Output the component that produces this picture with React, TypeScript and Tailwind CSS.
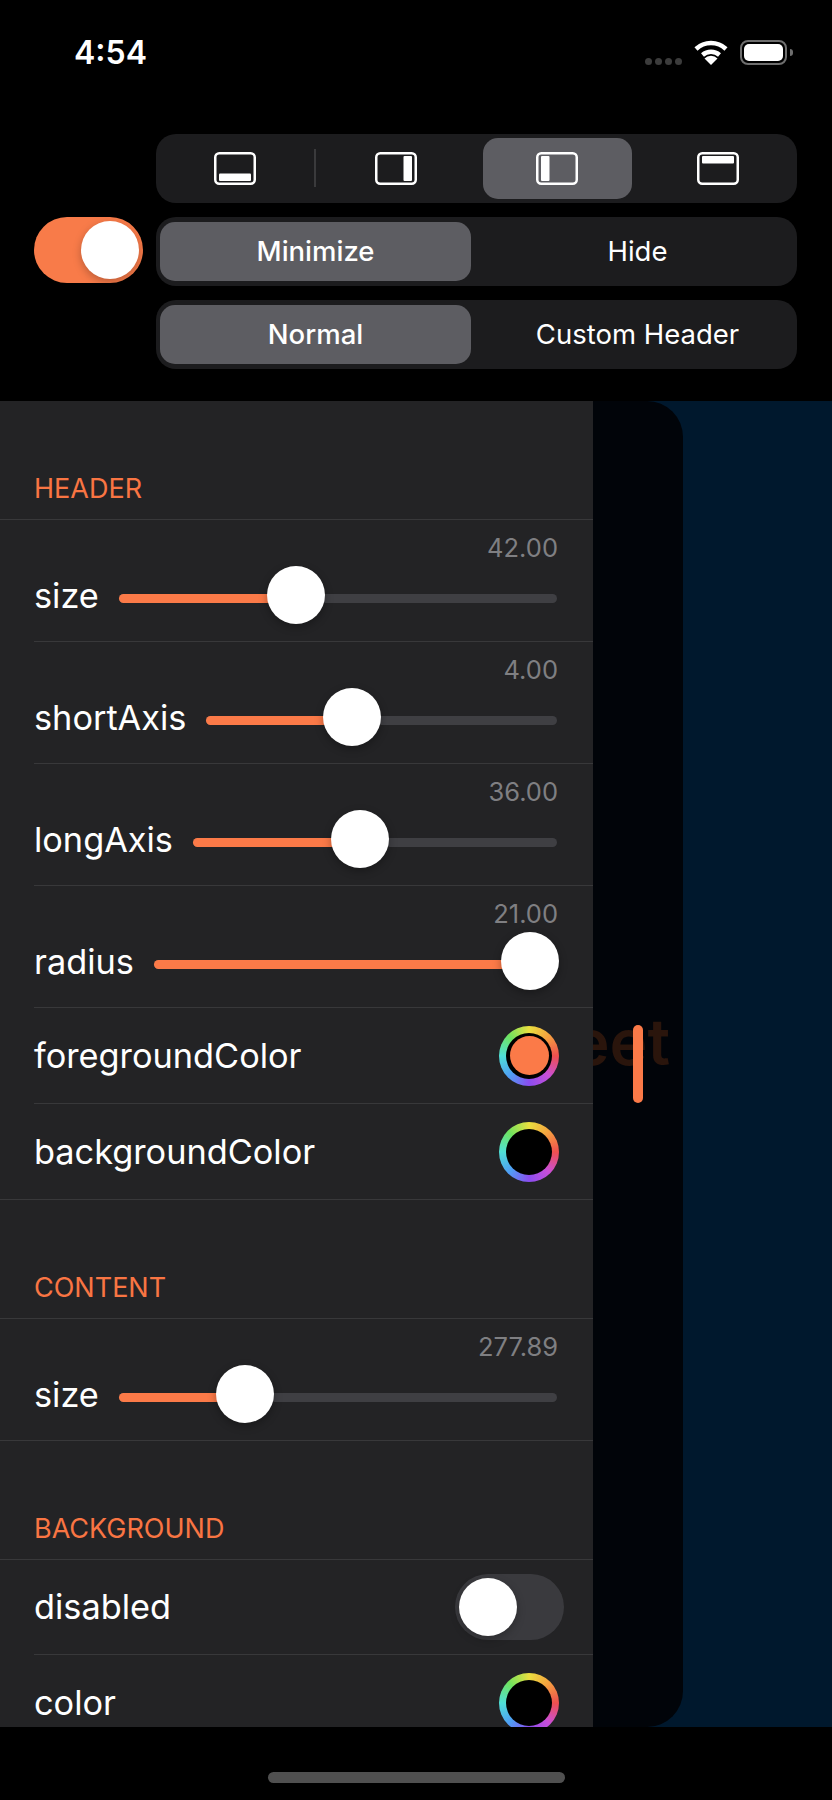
import React from "react";

function PanelIcon({ side }: { side: "bottom" | "right" | "left" | "top" }) {
  const bar =
    side === "bottom" ? { x: 5, y: 21.5, w: 32, h: 7.5 } :
    side === "top" ? { x: 5, y: 4, w: 32, h: 7.5 } :
    side === "right" ? { x: 28.5, y: 4, w: 8.5, h: 25 } :
    { x: 5, y: 4, w: 8.5, h: 25 };
  return (
    <svg width="42" height="33" viewBox="0 0 42 33" fill="none">
      <rect x="1.25" y="1.25" width="39.5" height="30.5" rx="4" stroke="#fff" strokeWidth="2.5" />
      <rect x={bar.x} y={bar.y} width={bar.w} height={bar.h} rx="1" fill="#fff" />
    </svg>
  );
}

function TextSegment({ left, right }: { left: string; right: string }) {
  return (
    <div className="grid h-[69px] grid-cols-2 gap-[11px] rounded-[20px] bg-[#1c1c1e] p-[4px] py-[5px]">
      <div className="flex items-center justify-center rounded-[15px] bg-[#5d5d62] pt-[1px] text-[27.5px] font-medium text-white">{left}</div>
      <div className="flex items-center justify-center pt-[1px] text-[27.5px] font-normal text-white">{right}</div>
    </div>
  );
}

function Section({ title, children }: { title: string; children: React.ReactNode }) {
  return (
    <section>
      <div className="flex h-[119px] items-end border-b border-[#38383a] pb-[16px] pl-[34px] text-[27px] leading-[28px] text-[#f97543]">{title}</div>
      {children}
    </section>
  );
}

function SliderRow({ label, value, pct, last }: { label: string; value: string; pct: number; last?: boolean }) {
  return (
    <div className={last ? "h-[122px] border-b border-[#38383a] pl-[34px]" : "ml-[34px] h-[122px] border-b border-[#38383a]"}>
      <div className="pr-[35px] pt-[14px] text-right text-[25.5px] leading-[28px] text-[#7f7f82]">{value}</div>
      <div className="mt-[6px] flex h-[58px] items-center gap-[20px] pr-[36px]">
        <span className="mb-[2px] text-[34.3px] leading-[40px] text-white">{label}</span>
        <div className="relative mt-[2px] h-[9px] flex-1 rounded-full bg-[#3f3f43]">
          <div className="h-full rounded-full bg-[#fb7a48]" style={{ width: `${Math.min(pct, 100)}%` }} />
          <div
            className="absolute top-[-28px] h-[58px] w-[58px] rounded-full bg-white shadow-[0_3px_8px_rgba(0,0,0,0.3)]"
            style={{ left: `calc((100% - 58px) * ${pct / 100})` }}
          />
        </div>
      </div>
    </div>
  );
}

function ColorRow({ label, dot, last }: { label: string; dot?: boolean; last?: boolean }) {
  return (
    <div className={(last ? "border-b pl-[34px]" : "ml-[34px] border-b") + " flex h-[96px] items-center justify-between border-[#38383a] pr-[34px]"}>
      <span className="text-[34.3px] leading-[40px] text-white">{label}</span>
      <div className="flex h-[60px] w-[60px] items-center justify-center rounded-full bg-[conic-gradient(#eadf3f,#f5a03f,#ef4f4f,#c94fd8,#8a4df0,#4f9ff5,#4fe0d8,#6fe35f,#eadf3f)]">
        <div className="flex h-[46px] w-[46px] items-center justify-center rounded-full bg-black">
          {dot && <div className="h-[39px] w-[39px] rounded-full bg-[#fb7a48]" />}
        </div>
      </div>
    </div>
  );
}

export default function App() {
  return (
    <div className="flex h-[1800px] w-[832px] flex-col overflow-hidden bg-black font-['Inter',sans-serif] text-white">
      <header className="h-[134px] shrink-0">
        <div className="flex items-start justify-between pl-[74px] pr-[39px] pt-[33px]">
          <span className="text-[32px] font-semibold leading-[40px]">4:54</span>
          <div className="flex items-center gap-[11px] pt-[5px]">
            <div className="flex gap-[3px] pt-[18px]">
              {[0, 1, 2, 3].map((i) => (
                <div key={i} className="h-[7px] w-[7px] rounded-full bg-[#3c3c3c]" />
              ))}
            </div>
            <svg width="36" height="28" viewBox="0 0 36 28" fill="none">
              <path d="M3 11 A22 22 0 0 1 33 11" stroke="#fff" strokeWidth="4.5" strokeLinecap="butt" />
              <path d="M9.5 17 A13 13 0 0 1 26.5 17" stroke="#fff" strokeWidth="4.5" />
              <path d="M18 27 L11.5 20.5 A9 9 0 0 1 24.5 20.5 Z" fill="#fff" />
            </svg>
            <div className="flex items-center gap-[3px]">
              <div className="h-[25px] w-[47px] rounded-[8px] border-2 border-[#6e6e6e] p-[2px]">
                <div className="h-full w-full rounded-[5px] bg-white" />
              </div>
              <div className="h-[7px] w-[3px] rounded-r-full bg-[#6e6e6e]" />
            </div>
          </div>
        </div>
      </header>

      <div className="flex h-[267px] shrink-0 items-start gap-[13px] pl-[34px]">
        <div className="mt-[83px] flex h-[66px] w-[109px] items-center justify-end rounded-full bg-[#f87b49] pr-[4px]">
          <div className="h-[58px] w-[58px] rounded-full bg-white shadow-[0_3px_8px_rgba(0,0,0,0.25)]" />
        </div>
        <div className="flex w-[641px] flex-col gap-[14px]">
          <div className="relative grid h-[69px] grid-cols-4 gap-[12px] rounded-[20px] bg-[#1c1c1e] px-[4.5px] py-[4px]">
            <div className="flex items-center justify-center"><PanelIcon side="bottom" /></div>
            <div className="flex items-center justify-center"><PanelIcon side="right" /></div>
            <div className="flex items-center justify-center rounded-[15px] bg-[#5d5d62]"><PanelIcon side="left" /></div>
            <div className="flex items-center justify-center"><PanelIcon side="top" /></div>
            <div className="absolute left-[158px] top-[15px] h-[38px] w-[1.5px] bg-[#3a3a3c]" />
          </div>
          <TextSegment left="Minimize" right="Hide" />
          <TextSegment left="Normal" right="Custom Header" />
        </div>
      </div>

      <main className="flex h-[1326px] shrink-0 bg-[#00182d]">
        <div className="relative z-10 h-full w-[593px] shrink-0 overflow-hidden bg-[#232325]">
          <Section title="HEADER">
            <SliderRow label="size" value="42.00" pct={39} />
            <SliderRow label="shortAxis" value="4.00" pct={40} />
            <SliderRow label="longAxis" value="36.00" pct={45} />
            <SliderRow label="radius" value="21.00" pct={100.6} />
            <ColorRow label="foregroundColor" dot />
            <ColorRow label="backgroundColor" last />
          </Section>
          <Section title="CONTENT">
            <SliderRow label="size" value="277.89" pct={25.5} last />
          </Section>
          <Section title="BACKGROUND">
            <div className="ml-[34px] flex h-[95px] items-center justify-between border-b border-[#38383a] pr-[29px]">
              <span className="text-[34.3px] leading-[40px] text-white">disabled</span>
              <div className="flex h-[66px] w-[109px] items-center rounded-full bg-[#3a3a3e] pl-[4px]">
                <div className="h-[58px] w-[58px] rounded-full bg-white shadow-[0_3px_8px_rgba(0,0,0,0.25)]" />
              </div>
            </div>
            <ColorRow label="color" />
          </Section>
        </div>
        <div className="relative flex h-full w-[90px] shrink-0 items-center justify-end rounded-r-[36px] bg-[#010409] pr-[13px]">
          <span className="mb-[44px] text-[64px] font-semibold leading-[70px] text-[#2a150c]">Sheet</span>
          <div className="absolute left-[40px] top-[624px] h-[78px] w-[10px] rounded-full bg-[#fb7a48]" />
        </div>
      </main>

      <footer className="flex flex-1 items-start justify-center pt-[45px]">
        <div className="h-[11px] w-[297px] rounded-full bg-[#505050]" />
      </footer>
    </div>
  );
}
